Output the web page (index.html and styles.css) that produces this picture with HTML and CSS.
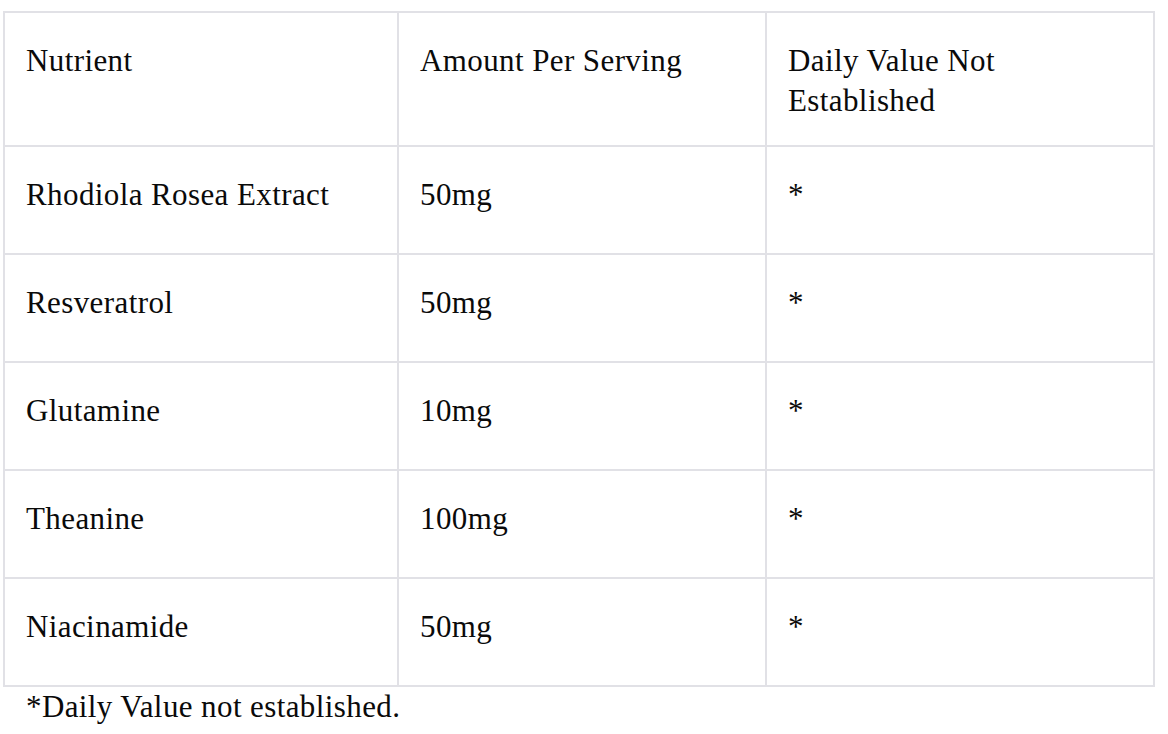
FILE: index.html
```html
<!DOCTYPE html>
<html>
<head>
<meta charset="utf-8">
<link rel="stylesheet" href="styles.css">
</head>
<body>
<div class="wrap">
  <table class="facts">
    <colgroup>
      <col class="c1">
      <col class="c2">
      <col class="c3">
    </colgroup>
    <thead>
      <tr>
        <th>Nutrient</th>
        <th>Amount Per Serving</th>
        <th>Daily Value Not Established</th>
      </tr>
    </thead>
    <tbody>
      <tr><td>Rhodiola Rosea Extract</td><td>50mg</td><td>*</td></tr>
      <tr><td>Resveratrol</td><td>50mg</td><td>*</td></tr>
      <tr><td>Glutamine</td><td>10mg</td><td>*</td></tr>
      <tr><td>Theanine</td><td>100mg</td><td>*</td></tr>
      <tr><td>Niacinamide</td><td>50mg</td><td>*</td></tr>
    </tbody>
  </table>
  <p class="note">*Daily Value not established.</p>
</div>
</body>
</html>
```

FILE: styles.css
```css
html, body {
  margin: 0;
  padding: 0;
  background: #ffffff;
}
.wrap {
  padding: 11px 0 0 3px;
  font-family: "Liberation Serif", "Times New Roman", serif;
  font-size: 31px;
  letter-spacing: 0.4px;
  line-height: 40px;
  color: #0a0a0a;
}
.facts {
  width: 1152px;
  table-layout: fixed;
  border-collapse: separate;
  border-spacing: 0;
  border-left: 2px solid #e1e1e6;
  border-top: 2px solid #e1e1e6;
}
.c1 { width: 394px; }
.c2 { width: 368px; }
.c3 { width: 388px; }
.facts th,
.facts td {
  border-right: 2px solid #e1e1e6;
  border-bottom: 2px solid #e1e1e6;
  text-align: left;
  font-weight: normal;
  vertical-align: top;
}
.facts th {
  padding: 28px 21px 24px;
}
.facts td {
  padding: 28px 21px 38px;
}
.note {
  margin: 0;
  padding-left: 23px;
}
```
